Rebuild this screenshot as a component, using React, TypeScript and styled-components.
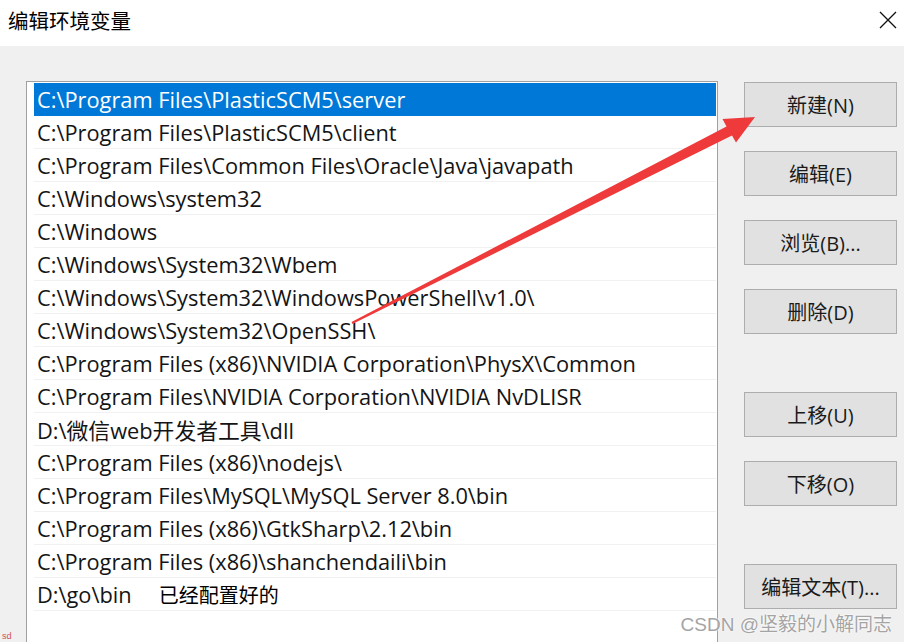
import React from "react";
import styled, { createGlobalStyle } from "styled-components";

const GlobalStyle = createGlobalStyle`
  html, body {
    margin: 0;
    padding: 0;
    background: #f0f0f0;
  }
  * {
    box-sizing: border-box;
  }
`;

const FONT = `"Open Sans", "Noto Sans CJK SC", sans-serif`;

const paths = [
  "C:\\Program Files\\PlasticSCM5\\server",
  "C:\\Program Files\\PlasticSCM5\\client",
  "C:\\Program Files\\Common Files\\Oracle\\Java\\javapath",
  "C:\\Windows\\system32",
  "C:\\Windows",
  "C:\\Windows\\System32\\Wbem",
  "C:\\Windows\\System32\\WindowsPowerShell\\v1.0\\",
  "C:\\Windows\\System32\\OpenSSH\\",
  "C:\\Program Files (x86)\\NVIDIA Corporation\\PhysX\\Common",
  "C:\\Program Files\\NVIDIA Corporation\\NVIDIA NvDLISR",
  "D:\\微信web开发者工具\\dll",
  "C:\\Program Files (x86)\\nodejs\\",
  "C:\\Program Files\\MySQL\\MySQL Server 8.0\\bin",
  "C:\\Program Files (x86)\\GtkSharp\\2.12\\bin",
  "C:\\Program Files (x86)\\shanchendaili\\bin",
  "D:\\go\\bin",
];

const Dialog = styled.div`
  position: relative;
  width: 904px;
  height: 642px;
  overflow: hidden;
  display: flex;
  flex-direction: column;
  font-family: ${FONT};
  background: #f0f0f0;
`;

const TitleBar = styled.div`
  height: 46px;
  flex: none;
  background: #ffffff;
  display: flex;
  align-items: center;
  justify-content: space-between;
  padding: 0 4px 6px 8px;
`;

const Title = styled.span`
  font-family: "Noto Sans CJK SC", sans-serif;
  font-size: 20.5px;
  color: #000;
`;

const CloseButton = styled.div`
  width: 24px;
  height: 24px;
  display: flex;
  align-items: center;
  justify-content: center;
`;

const Body = styled.div`
  flex: 1;
  display: flex;
  align-items: flex-start;
  padding: 35px 0 0 26px;
`;

const ListBox = styled.div`
  width: 692px;
  height: 600px;
  flex: none;
  background: #ffffff;
  border: 1px solid #a0a0a0;
  border-bottom: none;
  padding: 1px 1px 0 7px;
`;

const Row = styled.div<{ $selected?: boolean }>`
  height: 33px;
  display: flex;
  align-items: center;
  padding-left: 3px;
  font-size: 21.8px;
  white-space: nowrap;
  color: ${(p) => (p.$selected ? "#ffffff" : "#141414")};
  background: ${(p) => (p.$selected ? "#0078d7" : "transparent")};
  border-bottom: 1px solid ${(p) => (p.$selected ? "#0078d7" : "#f1f1f1")};
`;

const Note = styled.span`
  font-family: "Noto Sans CJK SC", sans-serif;
  font-size: 20px;
  color: #000;
  margin-left: 27px;
`;

const ButtonColumn = styled.div`
  margin-left: 26px;
  padding-top: 1px;
  display: flex;
  flex-direction: column;
  gap: 24px;
`;

const Button = styled.div<{ $spaced?: boolean }>`
  width: 153px;
  height: 45px;
  display: flex;
  align-items: center;
  justify-content: center;
  background: #e1e1e1;
  border: 1px solid #adadad;
  font-family: "Open Sans", "Noto Sans CJK SC", sans-serif;
  font-size: 20px;
  color: #1a1a1a;
  margin-top: ${(p) => (p.$spaced ? "34px" : "0")};
`;

const Watermark = styled.div`
  position: absolute;
  right: 12px;
  bottom: 6px;
  font-family: "Liberation Sans", "Noto Sans CJK SC", sans-serif;
  font-size: 19px;
  color: #a4a4a4;
  text-shadow: 0 0 2px #fff, 0 0 2px #fff;
`;

const Corner = styled.div`
  position: absolute;
  left: 2px;
  bottom: 1px;
  font-family: "Liberation Sans", sans-serif;
  font-size: 9px;
  color: #d05050;
`;

const ArrowLayer = styled.svg`
  position: absolute;
  left: 0;
  top: 0;
  pointer-events: none;
`;

const Arrow = () => (
  <ArrowLayer width="904" height="642" viewBox="0 0 904 642">
    <polygon
      fill="#ee3a3a"
      points="351.5,322.0 352.5,324.0 732.0,135.5 736.0,142.5 755,117 722.5,119.0 726.5,126.5"
    />
  </ArrowLayer>
);

const CloseIcon = () => (
  <svg width="18" height="18" viewBox="0 0 18 18">
    <path d="M1 1 L17 17 M17 1 L1 17" stroke="#111" strokeWidth="1.3" fill="none" />
  </svg>
);

const buttons: { label: string; spaced?: boolean }[] = [
  { label: "新建(N)" },
  { label: "编辑(E)" },
  { label: "浏览(B)..." },
  { label: "删除(D)" },
  { label: "上移(U)", spaced: true },
  { label: "下移(O)" },
  { label: "编辑文本(T)...", spaced: true },
];

const App = () => {
  return (
    <>
      <GlobalStyle />
      <Dialog>
        <TitleBar>
          <Title>编辑环境变量</Title>
          <CloseButton>
            <CloseIcon />
          </CloseButton>
        </TitleBar>
        <Body>
          <ListBox>
            {paths.map((p, i) => (
              <Row key={p} $selected={i === 0}>
                {p}
                {i === paths.length - 1 && <Note>已经配置好的</Note>}
              </Row>
            ))}
          </ListBox>
          <ButtonColumn>
            {buttons.map((b) => (
              <Button key={b.label} $spaced={b.spaced}>
                {b.label}
              </Button>
            ))}
          </ButtonColumn>
        </Body>
        <Arrow />
        <Watermark>CSDN @坚毅的小解同志</Watermark>
        <Corner>sd</Corner>
      </Dialog>
    </>
  );
};

export default App;
